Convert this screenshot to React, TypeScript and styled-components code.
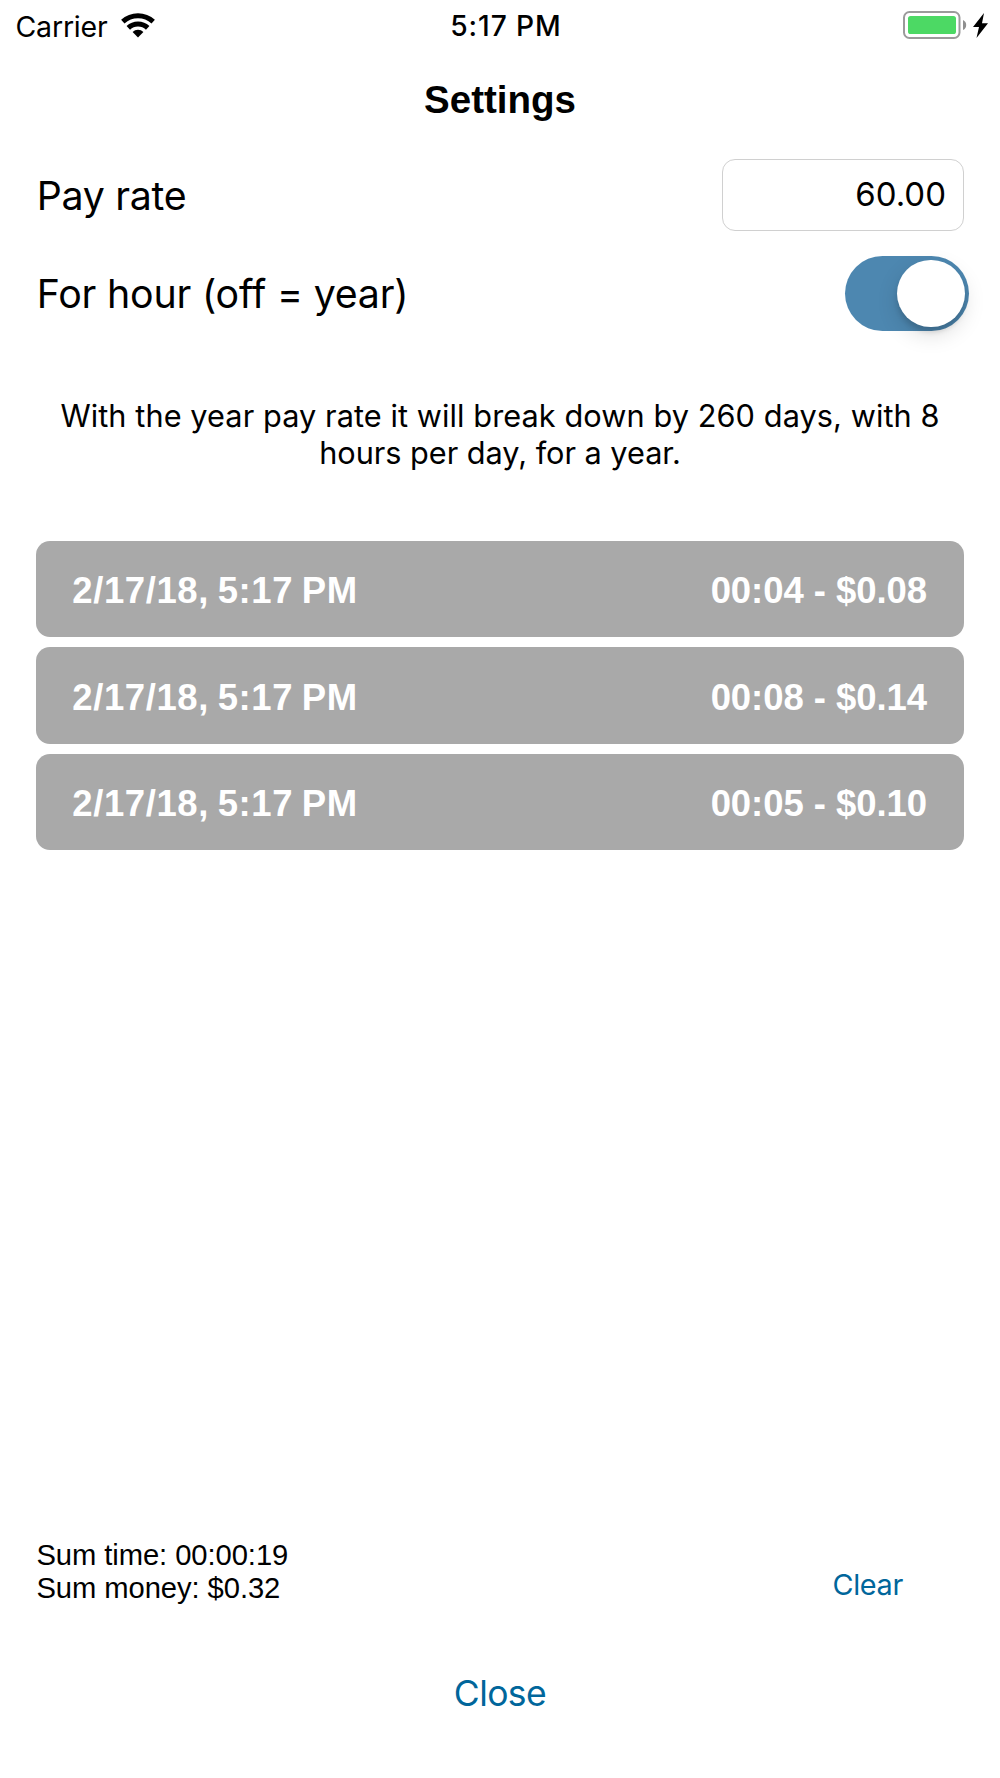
import React, { useState } from "react";
import styled, { createGlobalStyle } from "styled-components";

const system = '"Inter", "Roboto", sans-serif';
const helvetica = '"Liberation Sans", Arial, sans-serif';
const link = "#00669b";

const GlobalStyle = createGlobalStyle`
  *, *::before, *::after { box-sizing: border-box; }
  body { margin: 0; background: #fff; }
  button, input { font: inherit; color: inherit; }
`;

const Screen = styled.div`
  width: 1000px;
  height: 1778px;
  display: flex;
  flex-direction: column;
  background: #fff;
  color: #000;
  font-family: ${system};
  overflow: hidden;
`;

const StatusBar = styled.header`
  height: 51px;
  padding: 0 12px 0 15.5px;
  display: grid;
  grid-template-columns: 1fr auto 1fr;
  align-items: center;
  font-size: 28.5px;
  line-height: 51px;
`;

const Carrier = styled.div`
  display: flex;
  align-items: center;
  gap: 13px;
  letter-spacing: -0.2px;

  svg {
    margin-bottom: 2px;
  }
`;

const Clock = styled.div`
  font-size: 28.2px;
  font-weight: 500;
  letter-spacing: 0.9px;
  padding: 1px 0 0 8.5px;
`;

const Power = styled.div`
  display: flex;
  justify-content: flex-end;
  align-items: center;

  svg {
    margin-bottom: 2px;
  }
`;

const Title = styled.h1`
  margin: 0;
  height: 98px;
  text-align: center;
  font: 700 38.5px/98px ${helvetica};
`;

const Form = styled.section`
  display: flex;
  flex-direction: column;
  padding: 10px 36px 0;
  gap: 25px;
`;

const Field = styled.div<{ $height: number; $outset?: number }>`
  height: ${(p) => p.$height}px;
  display: flex;
  align-items: center;
  justify-content: space-between;
  margin-right: ${(p) => -(p.$outset ?? 0)}px;
`;

const Label = styled.label<{ $spacing: number }>`
  padding: 1px 0 0 0.8px;
  font-size: 39.3px;
  line-height: 48px;
  letter-spacing: ${(p) => p.$spacing}px;
  white-space: pre;
`;

const RateInput = styled.input`
  width: 242px;
  height: 72px;
  padding: 0 17px 3px;
  border: 1px solid #d0d0d0;
  border-radius: 13px;
  background: #fff;
  outline: none;
  font-size: 33px;
  text-align: right;
`;

const Switch = styled.button<{ $on: boolean }>`
  width: 123.5px;
  height: 75px;
  padding: 0 4px;
  border: 0;
  border-radius: 38px;
  background: ${(p) => (p.$on ? "#4d87b0" : "#e5e5e5")};
  display: flex;
  align-items: center;
  justify-content: ${(p) => (p.$on ? "flex-end" : "flex-start")};
`;

const Thumb = styled.span`
  width: 67.5px;
  height: 67.5px;
  border-radius: 50%;
  background: #fff;
  box-shadow: 0 8px 21px rgba(0, 0, 0, 0.13), 0 5px 5px rgba(0, 0, 0, 0.13);
`;

const Note = styled.p`
  margin: 66px 50px 0;
  font-size: 30.7px;
  line-height: 37.2px;
  text-align: center;
  white-space: nowrap;
`;

const NoteLine = styled.span<{ $spacing: number }>`
  display: block;
  letter-spacing: ${(p) => p.$spacing}px;
`;

const Sessions = styled.ul`
  list-style: none;
  margin: 69.6px 36.3px 0;
  padding: 0;
  display: flex;
  flex-direction: column;
  gap: 10px;
`;

const Session = styled.li`
  height: 96.4px;
  padding: 4px 36px 0;
  border-radius: 14px;
  background: #a9a9a9;
  color: #fff;
  display: flex;
  align-items: center;
  justify-content: space-between;
  font: 700 36.5px/44px ${helvetica};
`;

const SessionDate = styled.span`
  letter-spacing: 0.58px;
  word-spacing: -1.9px;
`;

const SessionResult = styled.span`
  letter-spacing: -0.05px;
  padding-right: 0.6px;
`;

const Footer = styled.footer`
  margin-top: auto;
  padding: 0 36px;
  display: flex;
  flex-direction: column;
`;

const Summary = styled.div`
  height: 80px;
  display: flex;
  justify-content: space-between;
  align-items: flex-start;
`;

const Totals = styled.div`
  padding-left: 0.4px;
  font: 400 29.2px/33.4px ${helvetica};
  letter-spacing: -0.07px;
`;

const TextButton = styled.button<{ $size: number; $spacing: number }>`
  border: 0;
  padding: 0;
  background: none;
  color: ${link};
  font-size: ${(p) => p.$size}px;
  letter-spacing: ${(p) => p.$spacing}px;
  line-height: 46px;
`;

const ClearButton = styled(TextButton)`
  margin: 22.500px 61px 0 0;
`;

const CloseButton = styled(TextButton)`
  align-self: center;
  margin: 52px 0 61px;
`;

const WifiIcon = () => (
  <svg width="34" height="25" viewBox="0 0 34 25">
    <g fill="none" stroke="#000" strokeWidth="5">
      <path d="M1.8 8.6 A22.5 22.5 0 0 1 32.2 8.6" />
      <path d="M7.3 14.9 A14 14 0 0 1 26.7 14.9" />
    </g>
    <path d="M17 24.4 L11.6 19 A7.7 7.7 0 0 1 22.4 19 Z" fill="#000" />
  </svg>
);

const BatteryIcon = () => (
  <svg width="85" height="30" viewBox="0 0 85 30">
    <rect x="1" y="2" width="55.5" height="26" rx="5.5" fill="#fff" stroke="#9b9b9b" strokeWidth="2" />
    <rect x="5" y="6" width="48" height="18" rx="2.6" fill="#4cd964" />
    <path d="M60 10 Q63.2 11.5 63.2 15 Q63.2 18.5 60 20 Z" fill="#8f8f8f" />
    <path d="M81 3 L70 17 H76 L73.5 28 L85 13.2 H79 Z" fill="#000" />
  </svg>
);

const sessions = [
  { date: "2/17/18, 5:17 PM", result: "00:04 - $0.08" },
  { date: "2/17/18, 5:17 PM", result: "00:08 - $0.14" },
  { date: "2/17/18, 5:17 PM", result: "00:05 - $0.10" },
];

export default function App() {
  const [rate, setRate] = useState("60.00");
  const [hourly, setHourly] = useState(true);

  return (
    <>
      <GlobalStyle />
      <Screen>
        <StatusBar>
          <Carrier>
            <span>Carrier</span>
            <WifiIcon />
          </Carrier>
          <Clock>5:17 PM</Clock>
          <Power>
            <BatteryIcon />
          </Power>
        </StatusBar>
        <Title>Settings</Title>
        <Form>
          <Field $height={72}>
            <Label htmlFor="rate" $spacing={-0.3}>Pay rate</Label>
            <RateInput id="rate" value={rate} onChange={(e) => setRate(e.target.value)} />
          </Field>
          <Field $height={75} $outset={4.5}>
            <Label $spacing={-0.2}>For hour (off = year)</Label>
            <Switch $on={hourly} role="switch" aria-checked={hourly} onClick={() => setHourly(!hourly)}>
              <Thumb />
            </Switch>
          </Field>
        </Form>
        <Note>
          <NoteLine $spacing={0.08}>With the year pay rate it will break down by 260 days, with 8</NoteLine>
          <NoteLine $spacing={-0.03}>hours per day, for a year.</NoteLine>
        </Note>
        <Sessions>
          {sessions.map((s, i) => (
            <Session key={i}>
              <SessionDate>{s.date}</SessionDate>
              <SessionResult>{s.result}</SessionResult>
            </Session>
          ))}
        </Sessions>
        <Footer>
          <Summary>
            <Totals>
              <div>Sum time: 00:00:19</div>
              <div>Sum money: $0.32</div>
            </Totals>
            <ClearButton $size={28.8} $spacing={-0.3}>Clear</ClearButton>
          </Summary>
          <CloseButton $size={35.5} $spacing={-0.6}>Close</CloseButton>
        </Footer>
      </Screen>
    </>
  );
}
